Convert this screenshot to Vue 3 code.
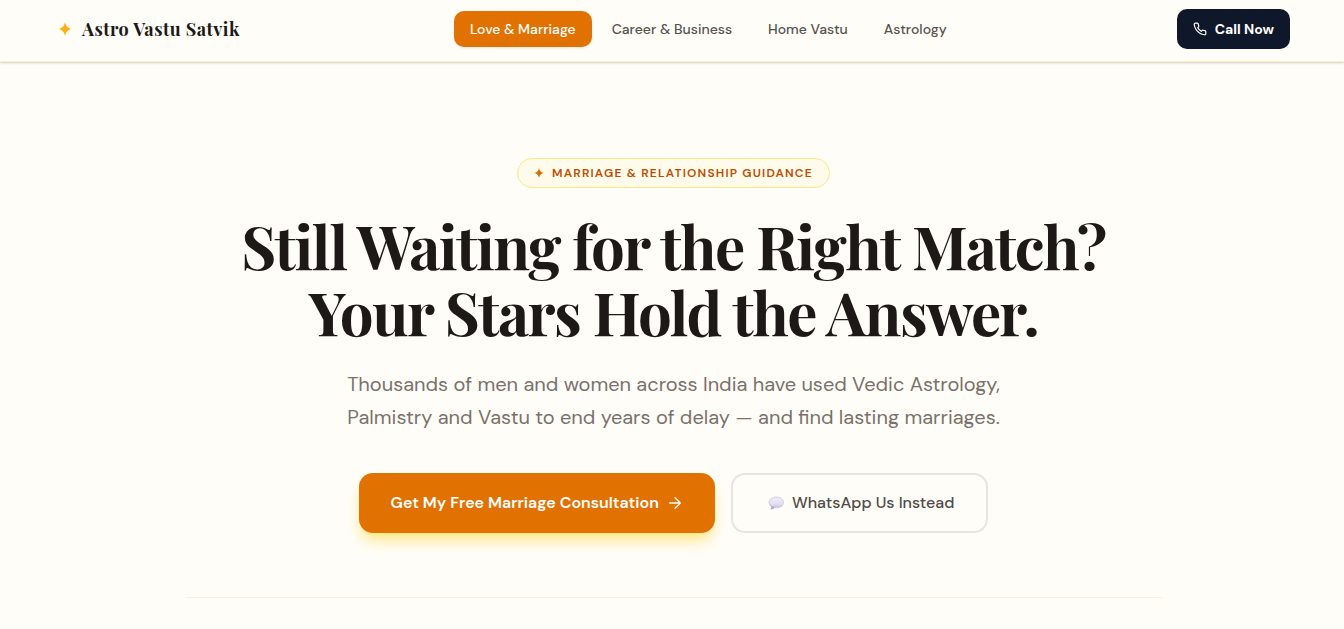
<script setup>
const links = [
  { label: 'Love & Marriage', active: true },
  { label: 'Career & Business', active: false },
  { label: 'Home Vastu', active: false },
  { label: 'Astrology', active: false },
]
</script>

<template>
  <div class="page">
    <header class="header">
      <a class="brand" href="#">
        <svg class="brand-star" viewBox="0 0 24 24" aria-hidden="true">
          <path d="M12 0C13.500 7.500 16.500 10.500 24 12C16.500 13.500 13.500 16.500 12 24C10.500 16.500 7.500 13.500 0 12C7.500 10.500 10.500 7.500 12 0Z" />
        </svg>
        <span>Astro Vastu Satvik</span>
      </a>
      <nav class="nav" aria-label="Services">
        <a v-for="link in links" :key="link.label" href="#" class="nav-link" :class="{ active: link.active }">{{ link.label }}</a>
      </nav>
      <a class="call" href="#">
        <svg class="call-icon" viewBox="0 0 24 24" aria-hidden="true">
          <path d="M22 16.920v3a2 2 0 0 1-2.180 2 19.790 19.790 0 0 1-8.630-3.070 19.500 19.500 0 0 1-6-6 19.790 19.790 0 0 1-3.070-8.670A2 2 0 0 1 4.110 2h3a2 2 0 0 1 2 1.720 12.840 12.840 0 0 0 .7 2.810 2 2 0 0 1-.45 2.110L8.090 9.910a16 16 0 0 0 6 6l1.270-1.270a2 2 0 0 1 2.110-.45 12.840 12.840 0 0 0 2.810.7A2 2 0 0 1 22 16.920z" />
        </svg>
        <span>Call Now</span>
      </a>
    </header>

    <main class="hero">
      <p class="badge">
        <svg class="badge-star" viewBox="0 0 24 24" aria-hidden="true">
          <path d="M12 0C13.500 7.500 16.500 10.500 24 12C16.500 13.500 13.500 16.500 12 24C10.500 16.500 7.500 13.500 0 12C7.500 10.500 10.500 7.500 12 0Z" />
        </svg>
        <span>MARRIAGE &amp; RELATIONSHIP GUIDANCE</span>
      </p>
      <h1 class="title">Still Waiting for the Right Match?<br />Your Stars Hold the Answer.</h1>
      <p class="lead">Thousands of men and women across India have used Vedic Astrology,<br />Palmistry and Vastu to end years of delay — and find lasting marriages.</p>
      <div class="actions">
        <button type="button" class="primary">
          <span>Get My Free Marriage Consultation</span>
          <svg class="arrow" viewBox="0 0 24 24" aria-hidden="true">
            <path d="M4 12h16M12 4l8 8-8 8" />
          </svg>
        </button>
        <button type="button" class="secondary">
          <svg class="bubble" viewBox="-3 0 19 14" aria-hidden="true">
            <defs>
              <linearGradient id="bubble-fill" x1="0" y1="0" x2="0" y2="1">
                <stop offset="0" stop-color="#f1edf6" />
                <stop offset="0.6" stop-color="#e4deef" />
                <stop offset="1" stop-color="#adb5d6" />
              </linearGradient>
            </defs>
            <path d="M8.500 1C4.500 1 1 3.200 1 6.300C1 8.200 2.100 9.600 3.700 10.500C3.900 11.600 3.500 12.500 2.900 13.200C4.700 13.100 6 12.400 6.700 11.500C12 12.200 15.500 9.800 15.500 6.400C15.500 3.300 12.500 1 8.500 1Z" fill="url(#bubble-fill)" stroke="#c0c0da" stroke-width="0.700" />
            <path d="M1.200 7C2 9 3.500 9.900 5 10.300L6.500 11.600C5.500 12.700 4.500 13.100 2.900 13.200C3.600 12.400 3.900 11.600 3.700 10.500C2.200 9.700 1.200 8.600 1.200 7Z" fill="#a3add0" />
          </svg>
          <span>WhatsApp Us Instead</span>
        </button>
      </div>
      <hr class="divider" />
    </main>
  </div>
</template>

<style>
body {
  background: #fffdf8;
}
</style>

<style scoped>
.page {
  color: #1c1917;
  font-family: "DM Sans", Inter, "Liberation Sans", sans-serif;
}
.header {
  display: flex;
  align-items: center;
  justify-content: space-between;
  box-sizing: border-box;
  min-height: 62px;
  padding: 0 54px 3px 58px;
  border-bottom: 1px solid #fdf0c0;
  box-shadow: 0 1px 3px rgba(0, 0, 0, 0.1), 0 1px 2px rgba(0, 0, 0, 0.1);
}
.brand {
  display: flex;
  align-items: center;
  gap: 10px;
  color: #1c1917;
  font-family: "Playfair Display", "Liberation Serif", serif;
  font-size: 18px;
  font-weight: 700;
  line-height: 28px;
  letter-spacing: 0.025em;
  text-decoration: none;
  white-space: nowrap;
}
.brand-star {
  width: 14px;
  height: 14px;
  fill: #fdae12;
}
.nav {
  display: flex;
  gap: 4px;
}
.nav-link {
  padding: 8px 16px;
  border-radius: 10px;
  color: #57534d;
  font-size: 14px;
  font-weight: 500;
  line-height: 20px;
  text-decoration: none;
  white-space: nowrap;
}
.nav-link.active {
  background: #e17100;
  color: #ffffff;
  box-shadow: 0 1px 3px rgba(0, 0, 0, 0.1);
}
.call {
  display: flex;
  align-items: center;
  gap: 8px;
  padding: 10px 16px;
  border-radius: 10px;
  background: #0f172b;
  color: #ffffff;
  font-size: 14px;
  font-weight: 700;
  line-height: 20px;
  text-decoration: none;
  white-space: nowrap;
}
.call-icon {
  width: 14px;
  height: 14px;
  fill: none;
  stroke: currentColor;
  stroke-width: 2;
  stroke-linecap: round;
  stroke-linejoin: round;
}
.hero {
  display: flex;
  flex-direction: column;
  align-items: center;
  padding: 96px 16px 30px 19px;
  text-align: center;
}
.badge {
  display: flex;
  align-items: center;
  gap: 8px;
  margin: 0 0 24px;
  padding: 6px 16px;
  border: 1px solid #fee685;
  border-radius: 16px;
  background: #fffbeb;
  color: #bb4d00;
  font-size: 12px;
  font-weight: 600;
  line-height: 16px;
  letter-spacing: 0.1em;
}
.badge-star {
  width: 10px;
  height: 10px;
  fill: #d96c00;
}
.title {
  margin: 0 0 24px;
  font-family: "Playfair Display", "Liberation Serif", serif;
  font-size: 60px;
  font-weight: 700;
  line-height: 66px;
  letter-spacing: -0.025em;
}
.lead {
  margin: 0 0 39px;
  color: #79716b;
  font-size: 20px;
  line-height: 33px;
}
.actions {
  display: flex;
  flex-wrap: wrap;
  justify-content: center;
  gap: 16px;
}
.primary,
.secondary {
  display: flex;
  align-items: center;
  justify-content: center;
  gap: 8px;
  min-height: 60px;
  padding: 0 32px;
  border: none;
  border-radius: 14px;
  font-family: inherit;
  font-size: 16px;
  line-height: 24px;
  white-space: nowrap;
}
.primary {
  background: #e17100;
  color: #ffffff;
  font-weight: 600;
  box-shadow: 0 10px 15px -3px #fee685, 0 4px 6px -4px #fee685;
}
.secondary {
  border: 2px solid #e7e5e4;
  background: transparent;
  color: #504b46;
  font-weight: 500;
}
.arrow {
  width: 16px;
  height: 16px;
  fill: none;
  stroke: currentColor;
  stroke-width: 2;
  stroke-linecap: round;
  stroke-linejoin: round;
}
.bubble {
  width: 19px;
  height: 14px;
}
.divider {
  width: 100%;
  max-width: 976px;
  height: 1px;
  margin: 64px 0 0;
  border: none;
  background: #faf2d8;
}
</style>
